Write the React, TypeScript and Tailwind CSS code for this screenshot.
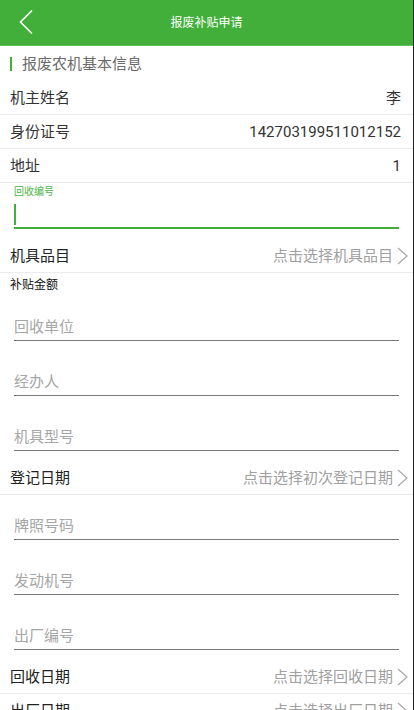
import React from "react";

const font = { fontFamily: '"Roboto", "Noto Sans CJK SC", sans-serif' };

function InfoRow({ label, value }: { label: string; value: string }) {
  return (
    <div className="h-[34px] flex items-center justify-between pl-[10px] pr-[12px] border-b border-[#ececec]">
      <span className="text-[15px] leading-[20px] text-[#333333]">{label}</span>
      <span className="text-[15px] leading-[20px] text-[#333333]">{value}</span>
    </div>
  );
}

function SelectRow({ label, hint }: { label: string; hint: string }) {
  return (
    <div className="h-[34px] flex items-center justify-between pl-[10px] pr-[5px] border-b border-[#ececec]">
      <span className="text-[15px] leading-[20px] text-[#222222]">{label}</span>
      <div className="flex items-center gap-[4px]">
        <span className="text-[15px] leading-[20px] text-[#a0a0a0]">{hint}</span>
        <svg width="11" height="18" viewBox="0 0 11 18" fill="none">
          <polyline points="1,1 10,9 1,17" stroke="#a8a8a8" strokeWidth="1.2" fill="none" />
        </svg>
      </div>
    </div>
  );
}

function Field({ hint }: { hint: string }) {
  return (
    <div className="h-[55px] px-[14px] pt-[21px]">
      <div className="h-[20px] leading-[20px] text-[15px] text-[#a6a6a6]">{hint}</div>
      <div className="mt-[3px] h-[1px] bg-[#7a7a7a]" />
    </div>
  );
}

export default function App() {
  return (
    <div className="w-[414px] min-h-[710px] bg-white border-r border-[#1e1e1e] overflow-hidden" style={font}>
      {/* Header */}
      <div className="h-[46px] bg-[#41af39] border-b border-[#62c25a] relative flex items-center justify-center">
        <svg className="absolute left-[19px] top-[10px]" width="14" height="24" viewBox="0 0 14 24" fill="none">
          <polyline points="13,0.5 1.5,12 13,23.5" stroke="#ffffff" strokeWidth="1.6" fill="none" />
        </svg>
        <span className="text-[12px] leading-[16px] text-white">报废补贴申请</span>
      </div>

      {/* Section header */}
      <div className="h-[35px] flex items-center pl-[10px]">
        <div className="w-[2px] h-[14px] bg-[#41af39]" />
        <span className="ml-[10px] text-[15px] leading-[20px] text-[#6a6a6a]">报废农机基本信息</span>
      </div>

      <InfoRow label="机主姓名" value="李" />
      <InfoRow label="身份证号" value="142703199511012152" />
      <InfoRow label="地址" value="1" />

      {/* Focused field */}
      <div className="h-[56px] px-[14px] pt-[2px]">
        <div className="h-[14px] leading-[14px] text-[10px] text-[#4cb444]">回收编号</div>
        <div className="mt-[5px] w-[2px] h-[21px] bg-[#41af39]" />
        <div className="mt-[2px] h-[2px] bg-[#41af39]" />
      </div>

      <SelectRow label="机具品目" hint="点击选择机具品目" />

      <div className="h-[23px] pl-[10px] pt-[6px]">
        <div className="text-[12px] leading-[12px] text-[#111111]">补贴金额</div>
      </div>

      <Field hint="回收单位" />
      <Field hint="经办人" />
      <Field hint="机具型号" />

      <SelectRow label="登记日期" hint="点击选择初次登记日期" />

      <Field hint="牌照号码" />
      <Field hint="发动机号" />
      <Field hint="出厂编号" />

      <SelectRow label="回收日期" hint="点击选择回收日期" />
      <SelectRow label="出厂日期" hint="点击选择出厂日期" />
    </div>
  );
}
